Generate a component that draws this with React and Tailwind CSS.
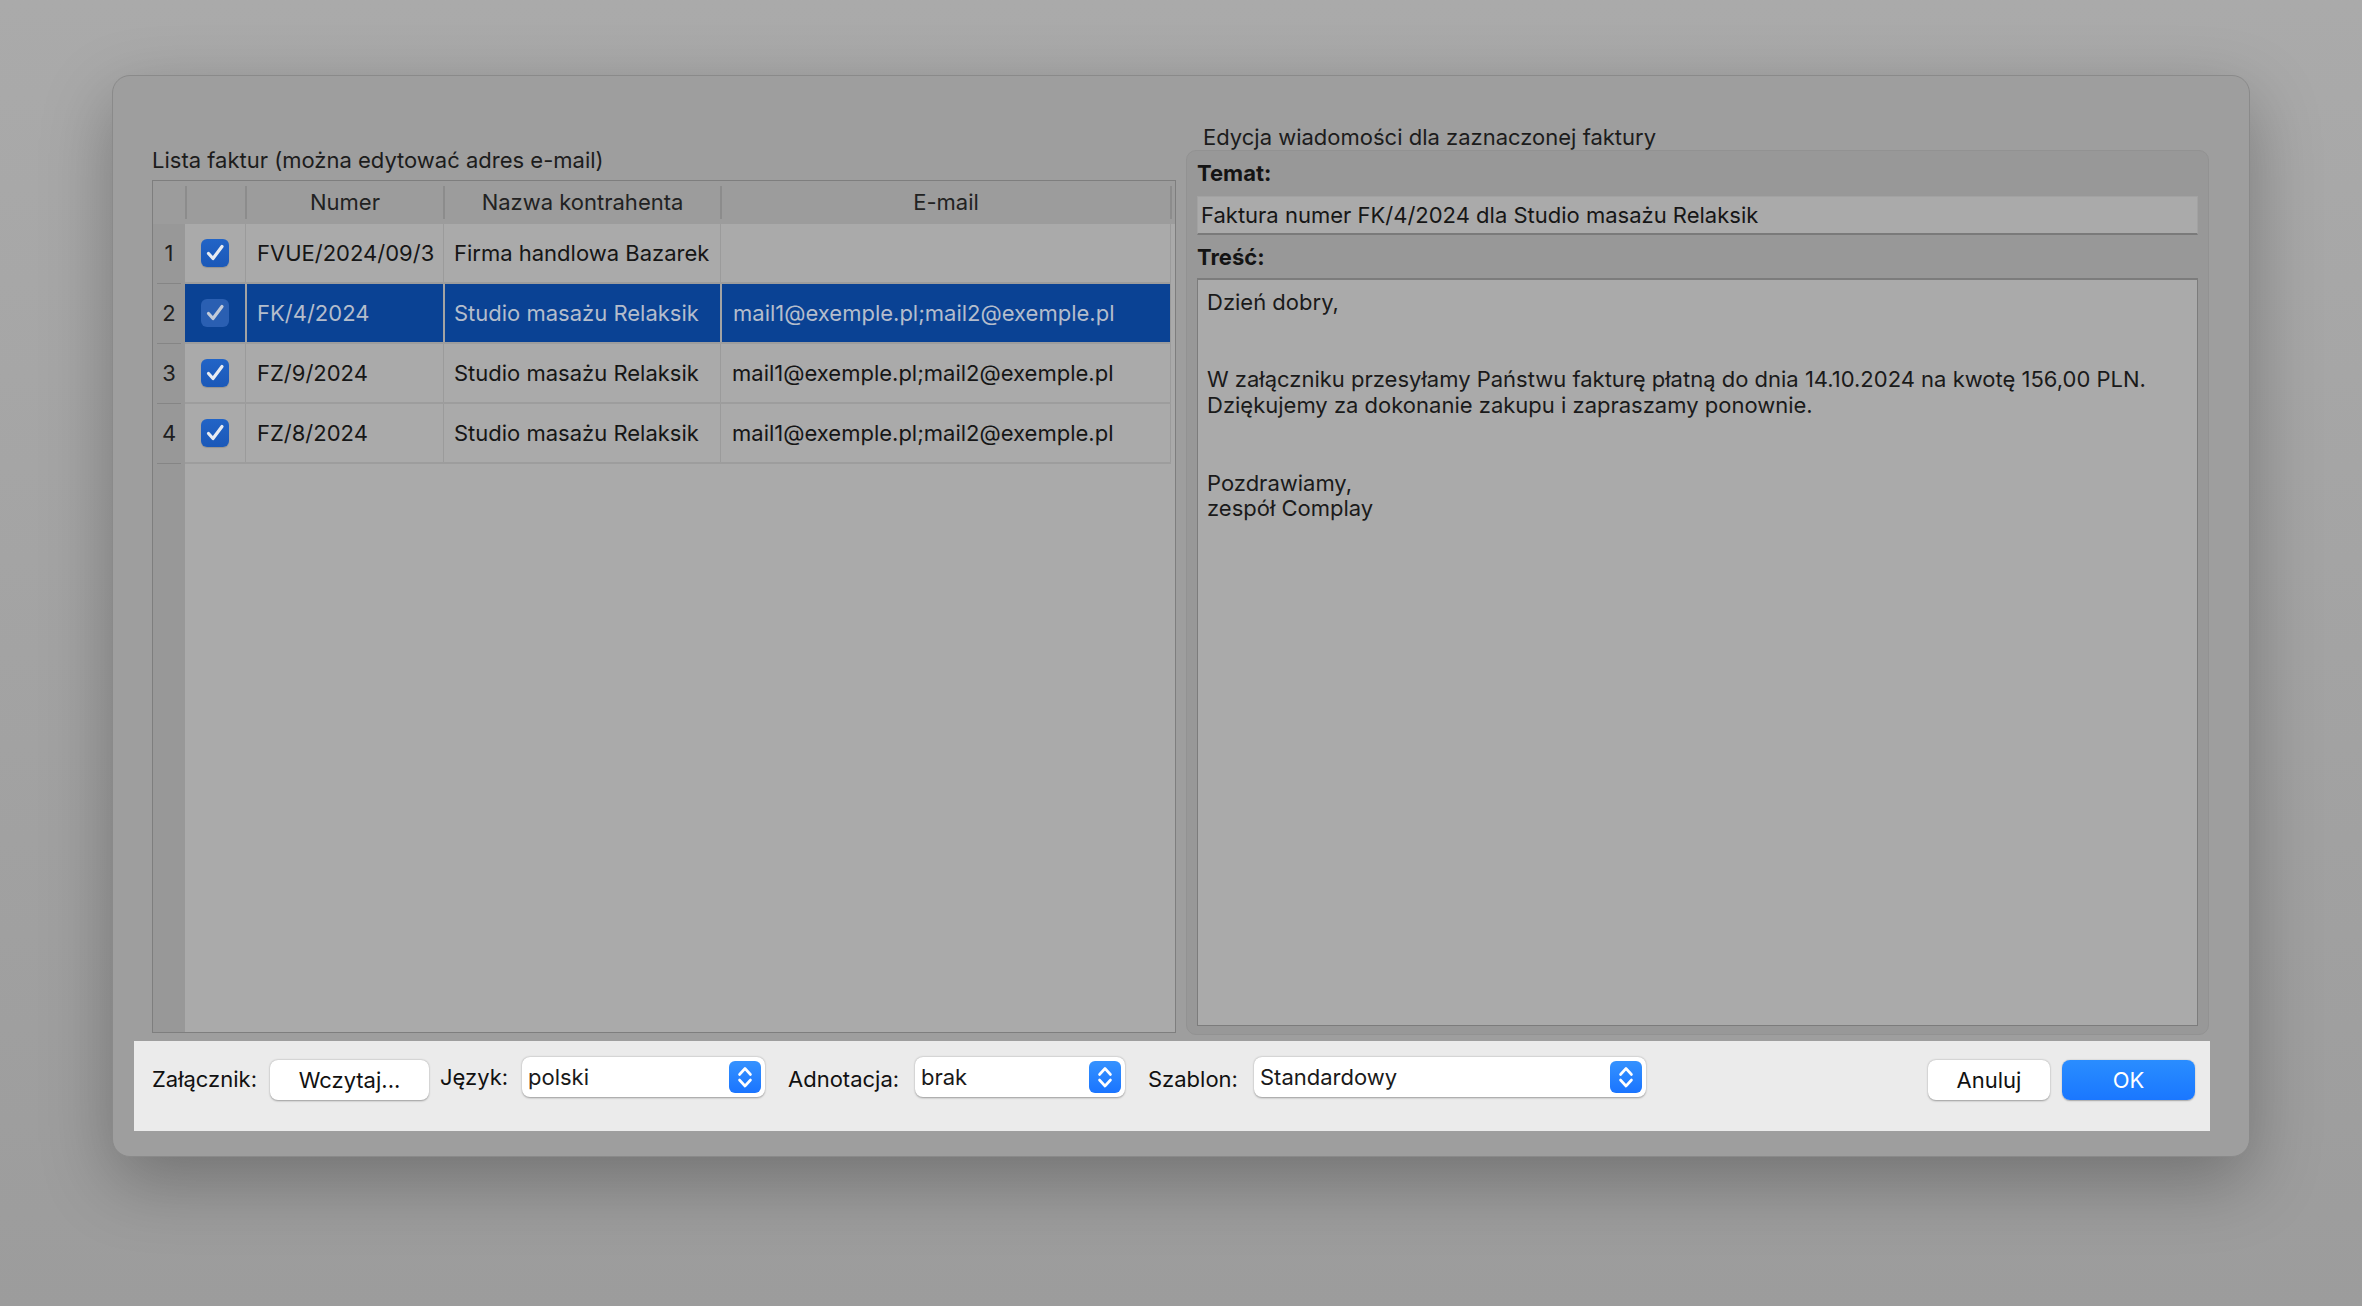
import React from 'react';

const rows = [
  { n: 1, numer: 'FVUE/2024/09/3', nazwa: 'Firma handlowa Bazarek', email: '' },
  { n: 2, numer: 'FK/4/2024', nazwa: 'Studio masażu Relaksik', email: 'mail1@exemple.pl;mail2@exemple.pl', selected: true },
  { n: 3, numer: 'FZ/9/2024', nazwa: 'Studio masażu Relaksik', email: 'mail1@exemple.pl;mail2@exemple.pl' },
  { n: 4, numer: 'FZ/8/2024', nazwa: 'Studio masażu Relaksik', email: 'mail1@exemple.pl;mail2@exemple.pl' },
];

const body = [
  'Dzień dobry,',
  '',
  '',
  'W załączniku przesyłamy Państwu fakturę płatną do dnia 14.10.2024 na kwotę 156,00 PLN.',
  'Dziękujemy za dokonanie zakupu i zapraszamy ponownie.',
  '',
  '',
  'Pozdrawiamy,',
  'zespół Complay',
];

const Checkbox = ({ dim }) => (
  <div
    className={
      dim
        ? 'w-[28px] h-[28px] rounded-[6px] bg-[#2a5fb2] flex items-center justify-center'
        : 'w-[28px] h-[28px] rounded-[6px] bg-gradient-to-b from-[#2264c6] to-[#1a58b8] shadow-[0_1px_1px_rgba(0,0,0,0.15)] flex items-center justify-center'
    }
  >
    <svg width="28" height="28" viewBox="0 0 28 28" fill="none">
      <path
        d="M7.5 14.5 L12 19.5 L21 7.5"
        stroke={dim ? '#c3cbd9' : '#e8ecf2'}
        strokeWidth="3.2"
        strokeLinecap="round"
        strokeLinejoin="round"
      />
    </svg>
  </div>
);

const Stepper = () => (
  <div className="w-[32px] h-[32px] rounded-[6px] bg-gradient-to-b from-[#3592ff] to-[#1a74ff] flex items-center justify-center shrink-0">
    <svg width="32" height="32" viewBox="0 0 32 32" fill="none">
      <path d="M10.5 13.5 L16 7.5 L21.5 13.5" stroke="white" strokeWidth="2.6" strokeLinecap="round" strokeLinejoin="round" />
      <path d="M10.5 19 L16 25 L21.5 19" stroke="white" strokeWidth="2.6" strokeLinecap="round" strokeLinejoin="round" />
    </svg>
  </div>
);

const Select = ({ value, width }) => (
  <div
    className="h-[40px] bg-white rounded-[8px] shadow-[0_0.5px_2px_rgba(0,0,0,0.35)] flex items-center justify-between pl-[6px] pr-[4px] shrink-0"
    style={{ width }}
  >
    <span className="text-[22px] text-[#1a1a1a]">{value}</span>
    <Stepper />
  </div>
);

export default function App() {
  return (
    <div
      className="min-h-screen w-full bg-gradient-to-b from-[#aaaaaa] to-[#9c9c9c] pt-[75px] pl-[112px]"
      style={{ fontFamily: 'Inter, "Noto Sans", "DejaVu Sans", sans-serif' }}
    >
      <div className="w-[2138px] h-[1082px] rounded-[18px] bg-[#9e9e9e] border border-[#8a8a8a] shadow-[0_24px_70px_rgba(0,0,0,0.28)] flex flex-col">
        {/* content */}
        <div className="flex pl-[39px] pr-[40px] pt-[49px] gap-[10px] items-start">
          {/* left: invoice list */}
          <div className="flex flex-col w-[1024px] shrink-0">
            <div className="h-[24px] mt-[23px] mb-[8px] leading-[24px] text-[22px] text-[#1c1c1c]">
              Lista faktur (można edytować adres e-mail)
            </div>
            <div className="h-[853px] border border-[#7e7e7e] bg-[#aaaaaa] flex">
              {/* row number column */}
              <div className="w-[32px] shrink-0 bg-[#989898] flex flex-col">
                <div className="h-[43px] bg-[#9c9c9c]" />
                {rows.map((r) => (
                  <div key={r.n} className="h-[60px] flex flex-col">
                    <div className="flex-1 flex items-center justify-center text-[22px] text-[#1e1e1e]">{r.n}</div>
                    <div className="h-px mx-[4px] bg-[#858585]" />
                  </div>
                ))}
              </div>
              <div className="w-[990px] shrink-0 flex flex-col">
                {/* header */}
                <div className="h-[43px] bg-[#9c9c9c] flex items-center text-[22px] text-[#222222]">
                  <div className="w-[2px] h-[33px] bg-[#8c8c8c]" />
                  <div className="w-[58px]" />
                  <div className="w-[2px] h-[33px] bg-[#8c8c8c]" />
                  <div className="w-[196px] text-center">Numer</div>
                  <div className="w-[2px] h-[33px] bg-[#8c8c8c]" />
                  <div className="w-[275px] text-center">Nazwa kontrahenta</div>
                  <div className="w-[2px] h-[33px] bg-[#8c8c8c]" />
                  <div className="w-[448px] text-center">E-mail</div>
                  <div className="w-[2px] h-[33px] bg-[#8c8c8c]" />
                </div>
                {rows.map((r) => (
                  <div key={r.n} className="h-[60px] flex flex-col w-[986px]">
                    <div
                      className={
                        r.selected
                          ? 'flex-1 flex items-stretch bg-[#0a4294] text-[#b4bdcc] text-[22px]'
                          : 'flex-1 flex items-stretch text-[#161616] text-[22px]'
                      }
                    >
                      <div className="w-[60px] shrink-0 flex items-center justify-center">
                        <Checkbox dim={r.selected} />
                      </div>
                      <div className={r.selected ? 'w-[2px] bg-[#a3a3a3]' : 'w-px bg-[#9b9b9b]'} />
                      <div className={r.selected ? 'w-[196px] flex items-center pl-[10px]' : 'w-[197px] flex items-center pl-[11px]'}>{r.numer}</div>
                      <div className={r.selected ? 'w-[2px] bg-[#a3a3a3]' : 'w-px bg-[#9b9b9b]'} />
                      <div className={r.selected ? 'w-[275px] flex items-center pl-[9px]' : 'w-[276px] flex items-center pl-[10px]'}>{r.nazwa}</div>
                      <div className={r.selected ? 'w-[2px] bg-[#a3a3a3]' : 'w-px bg-[#9b9b9b]'} />
                      <div className="flex-1 flex items-center pl-[11px] whitespace-nowrap">{r.email}</div>
                      <div className="w-px bg-[#9b9b9b]" />
                    </div>
                    <div className="h-[2px] bg-[#9d9d9d]" />
                  </div>
                ))}
              </div>
            </div>
          </div>

          {/* right: message editor */}
          <div className="flex flex-col w-[1023px] shrink-0">
            <div className="h-[24px] mb-[1px] pl-[17px] leading-[24px] text-[22px] text-[#1c1c1c]">
              Edycja wiadomości dla zaznaczonej faktury
            </div>
            <div className="h-[885px] rounded-[10px] bg-[#989898] border border-[#929292] flex flex-col px-[10px] pt-[10px] pb-[8px]">
              <div className="h-[24px] leading-[24px] text-[22px] font-bold text-[#141414]">Temat:</div>
              <div className="mt-[11px] h-[39px] bg-[#aaaaaa] border border-[#a2a2a2] border-b-[#7a7a7a] border-b-2 flex items-center pl-[3px] text-[22px] text-[#161616]">
                Faktura numer FK/4/2024 dla Studio masażu Relaksik
              </div>
              <div className="mt-[10px] h-[24px] leading-[24px] text-[22px] font-bold text-[#141414]">Treść:</div>
              <div className="mt-[9px] flex-1 bg-[#aaaaaa] border border-[#7c7c7c] border-t-2 pl-[9px] pt-[10px] text-[22px] leading-[25.8px] text-[#1a1a1a]">
                {body.map((line, i) => (
                  <div key={i} className="h-[25.8px] whitespace-pre">{line}</div>
                ))}
              </div>
            </div>
          </div>
        </div>

        {/* bottom bar */}
        <div className="mt-[6px] ml-[21px] mr-[39px] h-[90px] bg-[#ebebeb] flex items-start pt-[16px] pl-[18px] pr-[15px] text-[22px] text-[#111111]">
          <div className="w-[118px] h-[44px] flex items-center">Załącznik:</div>
          <button className="mt-[3px] w-[159px] h-[40px] bg-white rounded-[8px] shadow-[0_0.5px_2px_rgba(0,0,0,0.35)] text-[22px] text-[#111111]">
            Wczytaj...
          </button>
          <div className="ml-[11px] w-[82px] h-[41px] flex items-center">Język:</div>
          <Select value="polski" width={243} />
          <div className="ml-[23px] w-[127px] h-[44px] flex items-center">Adnotacja:</div>
          <Select value="brak" width={210} />
          <div className="ml-[23px] w-[106px] h-[44px] flex items-center">Szablon:</div>
          <Select value="Standardowy" width={392} />
          <div className="flex-1" />
          <button className="mt-[3px] w-[122px] h-[40px] bg-white rounded-[8px] shadow-[0_0.5px_2px_rgba(0,0,0,0.35)] text-[22px] text-[#111111]">
            Anuluj
          </button>
          <button className="mt-[3px] ml-[12px] w-[133px] h-[40px] rounded-[8px] bg-gradient-to-b from-[#2a8dff] to-[#1a77ff] shadow-[0_0.5px_1.5px_rgba(0,0,0,0.3)] text-[22px] text-white">
            OK
          </button>
        </div>
      </div>
    </div>
  );
}
